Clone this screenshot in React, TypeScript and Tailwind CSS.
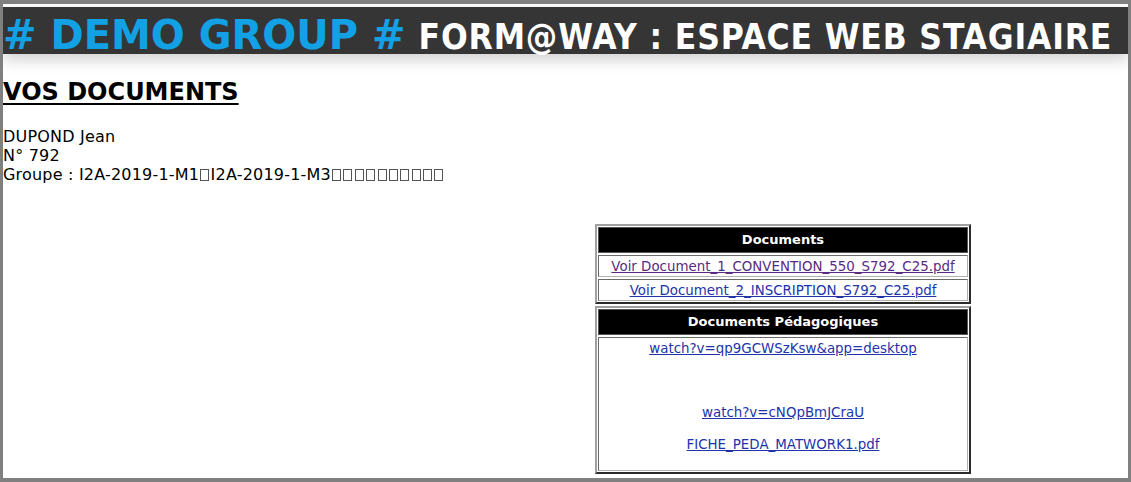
const verdana = { fontFamily: '"DejaVu Sans", Verdana, sans-serif' }

function Box({ n }: { n: number }) {
  return (
    <>
      {Array.from({ length: n }).map((_, i) => (
        <span key={i} className="inline-block w-[9px] h-[12px] border border-[#555] mx-[1.2px] align-[-1px]" />
      ))}
    </>
  )
}

function Table({ children }: { children: React.ReactNode }) {
  return (
    <div className="border-2 border-t-[#a0a0a0] border-l-[#a0a0a0] border-r-[#2a2a2a] border-b-[#2a2a2a] p-[1px] flex flex-col gap-[2px]">
      {children}
    </div>
  )
}

function Head({ title }: { title: string }) {
  return (
    <div className="bg-black text-white font-bold text-[13px] h-[26px] flex items-center justify-center border border-[#555]">
      {title}
    </div>
  )
}

function Cell({ children, className = '' }: { children: React.ReactNode; className?: string }) {
  return (
    <div className={'border border-t-[#6a6a6a] border-l-[#6a6a6a] border-r-[#b0b0b0] border-b-[#b0b0b0] text-center text-[13.4px] ' + className}>
      {children}
    </div>
  )
}

export default function App() {
  return (
    <div className="h-[482px] border-x-[3px] border-t-4 border-b-4 border-[#808080] bg-white pt-[3px] overflow-hidden" style={verdana}>
      <div className="h-[47px] bg-[#353535] flex items-baseline gap-[13px] pt-[6px] shadow-[0_6px_14px_rgba(0,0,0,0.18)] whitespace-nowrap">
        <span className="text-[#13a1e6] font-bold text-[40px] leading-[44px]">
          # DEMO GROUP #
        </span>
        <span className="text-white font-bold text-[35px] leading-[44px] tracking-[0.85px]" style={{ fontFamily: '"DejaVu Sans Condensed", Tahoma, sans-serif' }}>
          FORM@WAY : ESPACE WEB STAGIAIRE
        </span>
      </div>

      <h2 className="text-[24px] font-bold underline underline-offset-[3px] decoration-2 mt-[23px] leading-[30px] text-black">VOS DOCUMENTS</h2>

      <div className="mt-[20px] text-[16px] leading-[19px] text-black tracking-[0.2px]">
        <div>DUPOND Jean</div>
        <div>N° 792</div>
        <div>
          Groupe : I2A-2019-1-M1<Box n={1} />I2A-2019-1-M3<Box n={10} />
        </div>
      </div>

      <div className="ml-[592px] mt-[40px] w-[376px] flex flex-col gap-[2px]">
        <Table>
          <Head title="Documents" />
          <Cell className="h-[22px] leading-[20px] pt-[1px]">
            <a href="#" className="underline text-[#5a2a82]">Voir Document_1_CONVENTION_550_S792_C25.pdf</a>
          </Cell>
          <Cell className="h-[22px] leading-[20px] pt-[1px]">
            <a href="#" className="underline text-[#2233aa]">Voir Document_2_INSCRIPTION_S792_C25.pdf</a>
          </Cell>
        </Table>
        <Table>
          <Head title="Documents Pédagogiques" />
          <Cell className="h-[134px] pt-[3px] leading-[16px]">
            <a href="#" className="underline text-[#2233aa]">watch?v=qp9GCWSzKsw&amp;app=desktop</a>
            <div className="h-[48px]" />
            <a href="#" className="underline text-[#2233aa]">watch?v=cNQpBmJCraU</a>
            <div className="h-[16px]" />
            <a href="#" className="underline text-[#2233aa]">FICHE_PEDA_MATWORK1.pdf</a>
          </Cell>
        </Table>
      </div>
    </div>
  )
}
